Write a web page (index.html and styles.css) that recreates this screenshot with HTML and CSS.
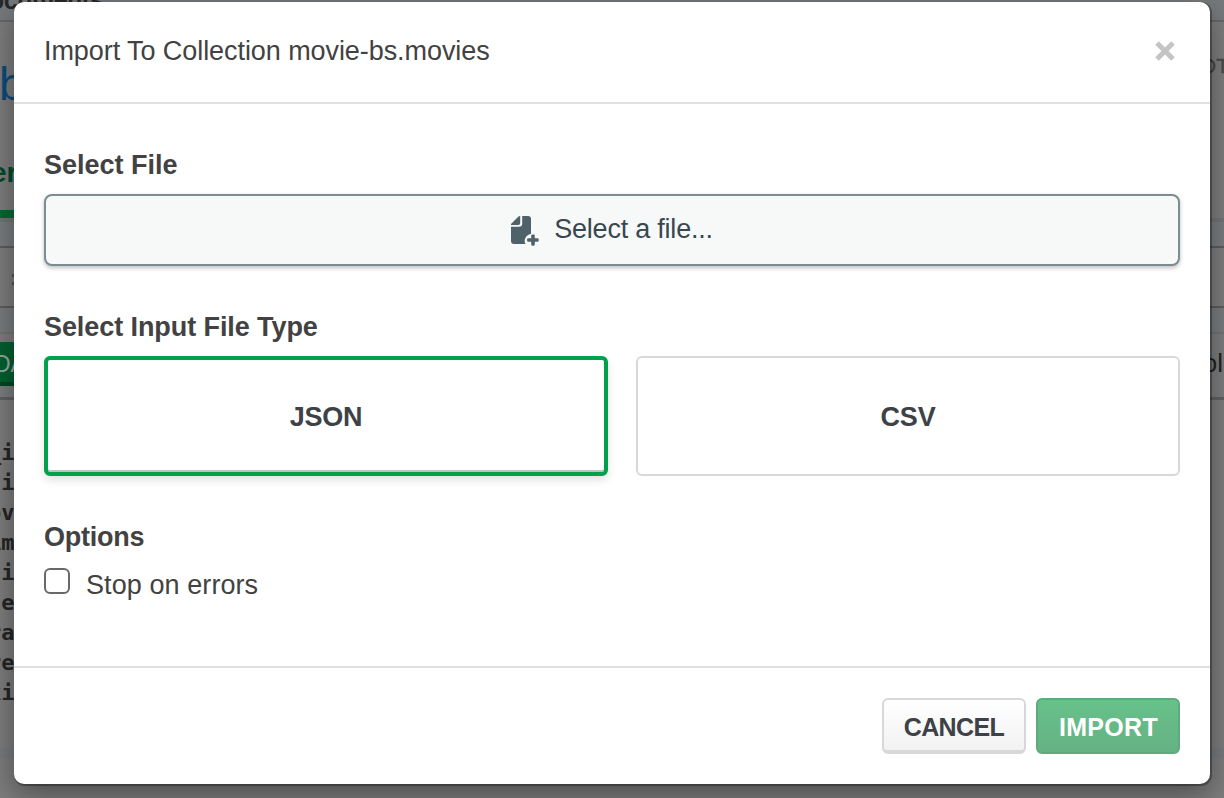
FILE: index.html
```html
<!DOCTYPE html>
<html lang="en">
<head>
<meta charset="utf-8">
<title>Import To Collection</title>
<link rel="stylesheet" href="styles.css">
</head>
<body>
<div class="page">
  <div class="row tabs"><span class="tab-label">ocuments</span></div>
  <div class="row title-row"><span class="db-name">b</span><span class="stat">OT</span></div>
  <div class="row nav"><span class="nav-label">er</span></div>
  <div class="row strip"></div>
  <div class="row query"><span>:</span></div>
  <div class="row strip-low"></div>
  <div class="row toolbar"><span class="add">DA</span><span class="display">ol</span></div>
  <div class="row docs"><span>_i</span><span>ti</span><span>ov</span><span>im</span><span>ti</span><span>te</span><span>ra</span><span>re</span><span>ki</span></div>
  <div class="row gap-row"></div>
</div>
<div class="overlay">
  <section class="modal">
    <header class="modal-header">
      <h1 class="heading">Import To Collection movie-bs.movies</h1>
      <button class="close" aria-label="Close"><svg width="20" height="20" viewBox="0 0 20 20"><path d="M2 2L18 18M18 2L2 18" stroke="#c4c4c4" stroke-width="5"/></svg></button>
    </header>
    <div class="modal-body">
      <h2 class="label label-file">Select File</h2>
      <button class="file-button">
        <svg width="28" height="32" viewBox="0 0 28 32" fill="#4f6169"><path d="M0 9V8L7.5 .6Q8.2 0 9.2 0V7Q9.2 9 7.2 9Z"/><path d="M11.2 0H17Q20 0 20 3V17.7A7.6 7.6 0 0 0 13.7 25.2Q13.7 27 14.6 28H3Q0 28 0 25V10.7H8Q11.2 10.7 11.2 7.7Z"/><path d="M21.3 19.6H22.7V23.3H26.6V24.7H22.7V28.6H21.3V24.7H17.2V23.3H21.3Z" stroke="#4f6169" stroke-width="2.2" stroke-linejoin="round"/></svg>
        <span class="file-text">Select a file...</span>
      </button>
      <h2 class="label label-type">Select Input File Type</h2>
      <div class="types">
        <button class="type selected"><span class="json">JSON</span></button>
        <button class="type"><span class="csv">CSV</span></button>
      </div>
      <h2 class="label label-options">Options</h2>
      <label class="option"><span class="checkbox"></span><span class="option-text">Stop on errors</span></label>
    </div>
    <footer class="modal-footer">
      <button class="action cancel"><span>CANCEL</span></button>
      <button class="action import"><span>IMPORT</span></button>
    </footer>
  </section>
</div>
</body>
</html>
```
FILE: styles.css
```css
* { box-sizing: border-box; }
body { margin: 0; width: 1224px; height: 798px; overflow: hidden; position: relative; font-family: "Liberation Sans", Arial, sans-serif; color: #424242; background: #7d7d7d; }
h1, h2 { margin: 0; }
button { font-family: inherit; padding: 0; margin: 0; }
span, h1, h2 { white-space: nowrap; }
svg { display: block; overflow: visible; }

.page { height: 798px; display: flex; flex-direction: column; }
.row { display: flex; justify-content: space-between; flex: none; overflow: hidden; }
.tabs { height: 22px; background: #777a7c; border-bottom: 2px solid #686868; }
.tab-label { font-size: 25px; font-weight: bold; line-height: 28px; margin: -14px 0 0 -11px; color: #292929; letter-spacing: -.5px; }
.title-row { height: 106px; }
.db-name { font-size: 46px; line-height: 52px; margin: 36px 0 0 -1px; color: #0c4b7c; }
.stat { font-size: 21px; line-height: 24px; margin: 32px -5px 0 0; color: #4a4a4a; -webkit-text-stroke: .4px #4a4a4a; }
.nav { height: 90px; }
.nav-label { width: 14px; height: 90px; padding-top: 29px; border-bottom: 8px solid #006a32; font-size: 28px; font-weight: bold; line-height: 32px; text-indent: -9px; color: #00492d; overflow: hidden; }
.strip { height: 30px; background: #797d80; border-top: 4px solid #747474; border-bottom: 2px solid #5d5d5d; }
.query { height: 60px; border-bottom: 2px solid #5d5d5d; }
.query span { font: 20px/24px "Liberation Mono", monospace; margin: 20px 0 0 7px; color: #555; }
.strip-low { height: 26px; background: #797d80; border-bottom: 2px solid #747474; }
.toolbar { height: 66px; background: #7b7d7e; border-bottom: 3px solid #616161; }
.add { width: 30px; height: 44px; margin-top: 8px; background: #00602f; border-bottom: 4px solid #004622; color: #9ba9a1; font-size: 23px; line-height: 44px; text-indent: -6px; overflow: hidden; }
.display { font-size: 26px; line-height: 30px; margin: 14px 1px 0 0; color: #222; }
.docs { height: 348px; padding-top: 38px; flex-direction: column; justify-content: flex-start; }
.docs span { font: bold 22px/30px "DejaVu Sans Mono", monospace; height: 30px; margin-left: -12px; color: #252525; }
.gap-row { height: 10px; background: #777b7e; }

.overlay { position: absolute; inset: 0; padding: 2px 14px 14px; }
.modal { height: 782px; background: #fff; border-radius: 10px; box-shadow: 1px 1px 0 1px rgba(0,0,0,.3), 0 10px 30px rgba(0,0,0,.4); display: flex; flex-direction: column; }
.modal-header { height: 102px; flex: none; border-bottom: 2px solid #e0e0e0; padding: 0 35px 0 30px; display: flex; justify-content: space-between; }
.heading { font-size: 27px; font-weight: 400; line-height: 32px; padding-top: 33px; letter-spacing: -.07px; }
.close { border: 0; background: none; width: 20px; height: 20px; margin-top: 39px; }
.modal-body { height: 564px; flex: none; padding: 44px 30px 0; border-bottom: 2px solid #e0e0e0; }
.label { font-size: 27px; font-weight: bold; line-height: 34px; }
.file-button { display: flex; align-items: flex-start; justify-content: center; width: 1136px; height: 72px; margin-top: 12px; border: 2px solid #7b8d92; border-radius: 8px; background: #f7f9f8; box-shadow: 0 2px 4px rgba(0,0,0,.25); }
.file-button svg { margin-top: 20px; }
.file-text { font-size: 27px; line-height: 32px; margin: 17px 0 0 15px; color: #39474f; letter-spacing: -.22px; }
.label-type { margin-top: 44px; letter-spacing: -.08px; }
.types { display: flex; gap: 28px; margin-top: 12px; }
.type { width: 544px; height: 120px; padding-top: 1px; border: 2px solid #d8d8d8; border-radius: 6px; background: #fff; color: #3d4247; font-size: 27px; font-weight: bold; line-height: 32px; }
.type.selected { width: 564px; border: 4px solid #00a14b; box-shadow: inset 0 -2px 0 #bfc2c0, 0 4px 8px rgba(0,0,0,.12); }
.json, .csv { letter-spacing: -.2px; }
.label-options { margin-top: 44px; letter-spacing: -.25px; }
.option { display: flex; align-items: flex-start; margin-top: 14px; }
.checkbox { width: 26px; height: 26px; border: 2px solid #696969; border-radius: 6px; }
.option-text { font-size: 27px; line-height: 32px; margin: 1px 0 0 16px; letter-spacing: .08px; }
.modal-footer { display: flex; justify-content: flex-end; gap: 10px; padding: 30px 30px 0; }
.action { width: 144px; height: 56px; border-radius: 6px; font-size: 25px; font-weight: bold; line-height: 32px; }
.cancel { color: #3d4247; background: linear-gradient(#fff, #f2f2f2); border: 2px solid #d8d8d8; border-bottom-width: 4px; padding-top: 4px; letter-spacing: -.6px; }
.import { color: #fff; background: linear-gradient(#67c18a, #65b283); border: 2px solid #60a97d; padding: 2px 0 0 1px; letter-spacing: .3px; }
```
